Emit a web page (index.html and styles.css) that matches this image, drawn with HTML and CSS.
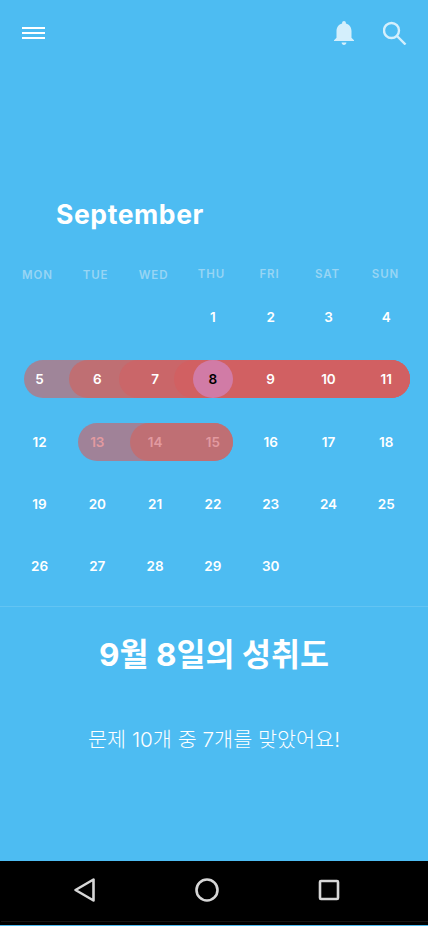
FILE: index.html
```html
<!DOCTYPE html>
<html lang="ko">
<head>
	<meta charset="UTF-8">
	<title>September</title>
	<link rel="stylesheet" href="styles.css">
</head>
<body>
	<div class="screen">
		<div class="topbar">
			<a class="menu" href="javascript:;"><span></span><span></span><span></span></a>
			<div class="actions">
				<svg class="bell" width="24" height="26" viewBox="0 0 24 26"><path d="M12 1c1.100 0 1.900.8 1.900 1.900v.6c3.500.9 5.600 3.900 5.600 7.600v6.600l2.500 2.500v.8H2v-.8l2.500-2.500v-6.600c0-3.700 2.100-6.700 5.600-7.600v-.6C10.100 1.800 10.900 1 12 1zM9.600 22.500h4.800c0 1.400-1.100 2.500-2.400 2.500s-2.400-1.100-2.400-2.500z"/></svg>
				<svg class="search" width="24" height="24" viewBox="0 0 24 24"><circle cx="8.500" cy="9.500" r="7.500"/><path d="M14 15l8.500 8.500"/></svg>
			</div>
		</div>

		<h1 class="month">September</h1>

		<div class="weekdays">
			<span class="low">MON</span><span class="low">TUE</span><span class="low">WED</span><span>THU</span><span>FRI</span><span>SAT</span><span>SUN</span>
		</div>

		<div class="week">
			<span></span><span></span><span></span><span>1</span><span>2</span><span>3</span><span>4</span>
		</div>
		<div class="week">
			<i class="pill p1"></i><i class="pill p2"></i><i class="pill p3"></i><i class="pill p4"></i><i class="today"></i>
			<span>5</span><span>6</span><span>7</span><span class="on-today">8</span><span>9</span><span>10</span><span>11</span>
		</div>
		<div class="week">
			<i class="pill q1"></i><i class="pill q2"></i>
			<span>12</span><span class="dim">13</span><span class="dim">14</span><span class="dim">15</span><span>16</span><span>17</span><span>18</span>
		</div>
		<div class="week">
			<span>19</span><span>20</span><span>21</span><span>22</span><span>23</span><span>24</span><span>25</span>
		</div>
		<div class="week">
			<span>26</span><span>27</span><span>28</span><span>29</span><span>30</span><span></span><span></span>
		</div>

		<div class="summary">
			<h2>9월 8일의 성취도</h2>
			<p>문제 10개 중 7개를 맞았어요!</p>
		</div>

		<div class="navbar">
			<svg width="24" height="26" viewBox="0 0 24 26"><path d="M20.500 2.500v21L2.500 13z"/></svg>
			<svg width="26" height="26" viewBox="0 0 26 26"><circle cx="13" cy="13" r="10.500"/></svg>
			<svg width="24" height="24" viewBox="0 0 24 24"><rect x="3" y="3" width="18" height="18" rx="1"/></svg>
		</div>
	</div>
</body>
</html>
```

FILE: styles.css
```css
*{
	padding:0;
	margin:0;
	box-sizing:border-box;
}
body{
	background-color:#4dbcf2;
	font-family:"Inter","Noto Sans CJK KR",sans-serif;
	color:#fff;
}
.screen{
	display:flex;
	flex-direction:column;
	height:926px;
	overflow:hidden;
}
.topbar{
	display:flex;
	justify-content:space-between;
	align-items:center;
	height:66px;
	padding:0 21px 0 22px;
}
.menu{
	display:flex;
	flex-direction:column;
	gap:3px;
	width:23px;
}
.menu span{
	display:block;
	height:2px;
	background-color:#fff;
}
.actions{
	display:flex;
	align-items:center;
	gap:27px;
}
.bell{
	fill:#d4effc;
}
.search{
	fill:none;
	stroke:#d4effc;
	stroke-width:2.400;
}
.month{
	margin:133px 0 0 56px;
	height:30px;
	font-size:26.500px;
	line-height:30px;
	font-weight:700;
	letter-spacing:.6px;
}
.weekdays{
	display:grid;
	grid-template-columns:repeat(7,58px);
	margin:38px 0 0 8.500px;
	height:14px;
}
.weekdays span{
	font-size:11.500px;
	line-height:14px;
	font-weight:600;
	letter-spacing:.9px;
	text-align:center;
	color:#97d5f4;
}
.weekdays .low{
	padding-top:1px;
}
.week{
	position:relative;
	display:grid;
	grid-template-columns:repeat(7,57.800px);
	align-items:center;
	height:62.250px;
	padding-left:10.600px;
}
.weekdays + .week{
	margin-top:5px;
}
.week span{
	position:relative;
	font-size:13.500px;
	font-weight:600;
	text-align:center;
}
.week .dim{
	color:#e29aa0;
}
.week .on-today{
	color:#000;
}
.pill{
	position:absolute;
	top:12px;
	right:18px;
	height:38px;
	border-radius:19px;
}
.p1{left:24px;background-color:#9f8599;}
.p2{left:69px;background-color:#bf6f73;}
.p3{left:119px;background-color:#ca6669;}
.p4{left:174px;background-color:#d16062;}
.today{
	position:absolute;
	top:12px;
	left:193px;
	width:40px;
	height:38px;
	border-radius:50%;
	background-color:#d17ba6;
}
.q1{left:78px;right:195px;background-color:#a08298;}
.q2{left:130px;right:195px;background-color:#bf6f74;}
.summary{
	flex:1;
	margin-top:9px;
	border-top:1px solid #63c4f3;
	text-align:center;
}
.summary h2{
	margin-top:26px;
	font-size:31.500px;
	line-height:44px;
	font-weight:700;
}
.summary p{
	margin-top:48px;
	font-size:20.700px;
	line-height:30px;
	font-weight:300;
}
.navbar{
	position:relative;
	display:flex;
	justify-content:center;
	align-items:center;
	gap:97px;
	height:64px;
	margin-bottom:1px;
	padding:0 14px 6px 0;
	background-color:#000;
}
/* thin line near the bottom of the bar */
.navbar::after{
	content:"";
	position:absolute;
	left:1px;
	right:0;
	bottom:3px;
	height:1px;
	background-color:#161616;
}
.navbar svg{
	fill:none;
	stroke:#d6d6d6;
	stroke-width:2.600;
	stroke-linejoin:round;
}
```
